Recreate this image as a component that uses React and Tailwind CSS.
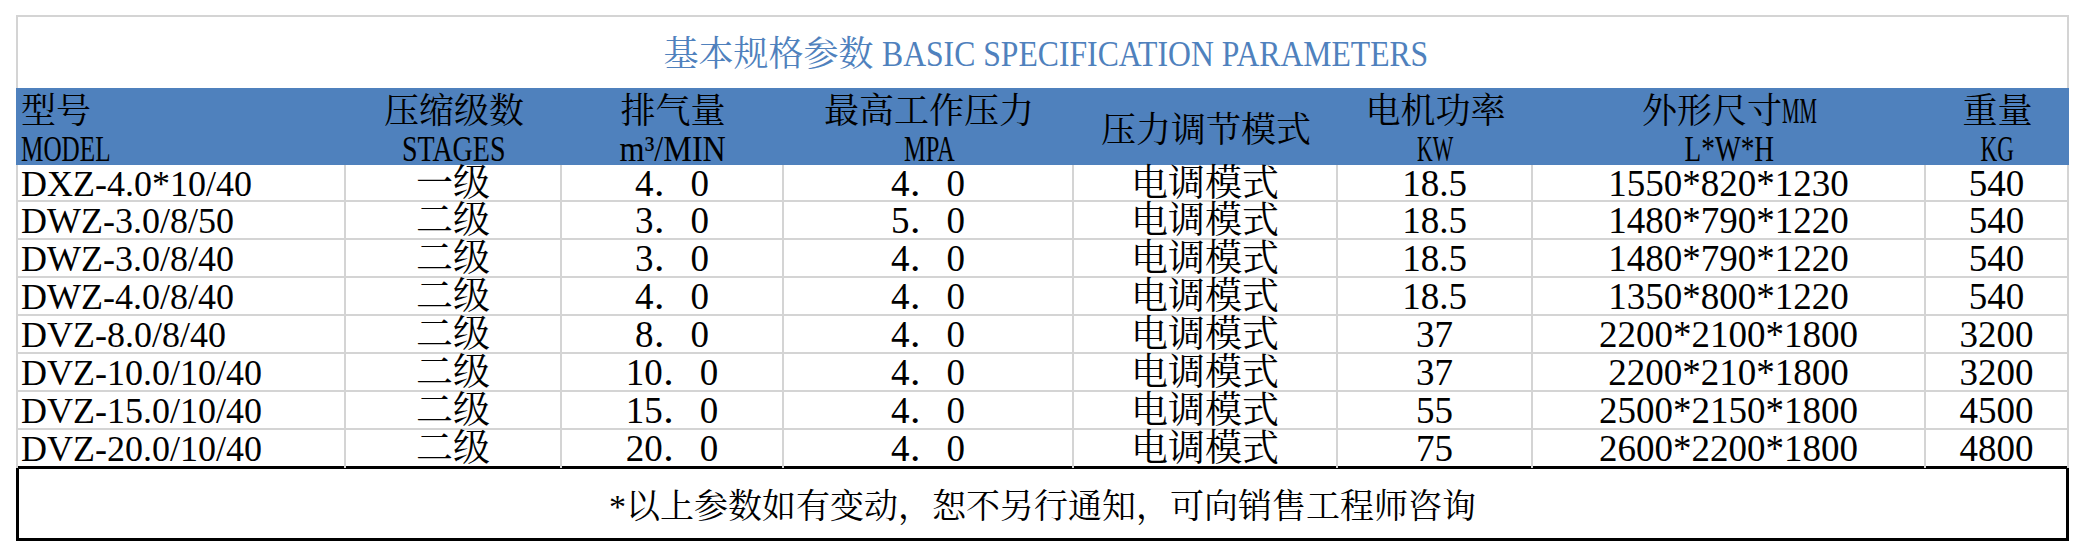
import React from "react";

const rows = [
  ["DXZ-4.0*10/40", "一级", "4．0", "4．0", "电调模式", "18.5", "1550*820*1230", "540"],
  ["DWZ-3.0/8/50", "二级", "3．0", "5．0", "电调模式", "18.5", "1480*790*1220", "540"],
  ["DWZ-3.0/8/40", "二级", "3．0", "4．0", "电调模式", "18.5", "1480*790*1220", "540"],
  ["DWZ-4.0/8/40", "二级", "4．0", "4．0", "电调模式", "18.5", "1350*800*1220", "540"],
  ["DVZ-8.0/8/40", "二级", "8．0", "4．0", "电调模式", "37", "2200*2100*1800", "3200"],
  ["DVZ-10.0/10/40", "二级", "10．0", "4．0", "电调模式", "37", "2200*210*1800", "3200"],
  ["DVZ-15.0/10/40", "二级", "15．0", "4．0", "电调模式", "55", "2500*2150*1800", "4500"],
  ["DVZ-20.0/10/40", "二级", "20．0", "4．0", "电调模式", "75", "2600*2200*1800", "4800"],
];

const grid =
  "grid grid-cols-[330px_216px_222px_290px_264px_195px_393px_143px]";

// SimSun-style half-width latin: squeeze Times caps horizontally
function Narrow({ children, className }) {
  return <span className={`inline-block whitespace-nowrap ${className}`}>{children}</span>;
}

function HeadCell({ top, bottom, left }) {
  return (
    <div
      className={`flex flex-col justify-center pt-[5px] leading-[38px] whitespace-nowrap ${
        left ? "items-start pl-[5px]" : "items-center"
      }`}
    >
      <div className="h-[38px]">{top}</div>
      {bottom && <div className="h-[38px]">{bottom}</div>}
    </div>
  );
}

export default function App() {
  return (
    <div className="w-[2086px] h-[556px] bg-white pt-[15px] pl-[16px] font-['Liberation_Serif','Noto_Serif_CJK_SC','Noto_Sans_CJK_SC',serif] text-[35px] text-black">
      <div className="w-[2053px]">
        {/* title */}
        <div className="h-[73px] border-2 border-b-0 border-[#d4d4d4] flex items-center justify-center pt-[4px] pl-[12px] leading-[38px] text-[#4f81bd] whitespace-nowrap">
          <span>基本规格参数</span>
          <span className="inline-block w-[552px] ml-[8px]">
            <Narrow className="origin-left scale-x-[0.905]">BASIC SPECIFICATION PARAMETERS</Narrow>
          </span>
        </div>

        {/* header */}
        <div className={`${grid} h-[77px] bg-[#4f81bd]`}>
          <HeadCell left top="型号" bottom={<Narrow className="origin-left scale-x-[0.72]">MODEL</Narrow>} />
          <HeadCell top="压缩级数" bottom={<Narrow className="scale-x-[0.8]">STAGES</Narrow>} />
          <HeadCell top="排气量" bottom={<Narrow className="scale-x-[0.92]">m³/MIN</Narrow>} />
          <HeadCell top="最高工作压力" bottom={<Narrow className="scale-x-[0.7]">MPA</Narrow>} />
          <HeadCell top="压力调节模式" />
          <HeadCell top="电机功率" bottom={<Narrow className="scale-x-[0.62]">KW</Narrow>} />
          <HeadCell
            top={
              <span>
                外形尺寸
                <span className="inline-block w-[35px]">
                  <Narrow className="origin-left scale-x-[0.56]">MM</Narrow>
                </span>
              </span>
            }
            bottom={<Narrow className="scale-x-[0.78]">L*W*H</Narrow>}
          />
          <HeadCell top="重量" bottom={<Narrow className="scale-x-[0.66]">KG</Narrow>} />
        </div>

        {/* data rows */}
        {rows.map((r, i) => (
          <div
            key={i}
            className={`${grid} ${i === 0 ? "h-[37px]" : i === rows.length - 1 ? "h-[36px]" : "h-[38px]"} ${
              i === rows.length - 1 ? "" : "border-b-2 border-[#d4d4d4]"
            }`}
          >
            {r.map((c, j) => (
              <div
                key={j}
                className={`border-r-2 border-[#d4d4d4] leading-[38px] whitespace-nowrap ${
                  j === 0 ? "border-l-2 pl-[3px] text-left text-[36px]" : "text-center text-[37px]"
                }`}
              >
                {c}
              </div>
            ))}
          </div>
        ))}

        {/* note */}
        <div className="h-[75px] border-[3px] border-black flex items-center justify-center pt-[6px] text-[34px] leading-[38px] whitespace-nowrap">
          *以上参数如有变动，恕不另行通知，可向销售工程师咨询
        </div>
      </div>
    </div>
  );
}
